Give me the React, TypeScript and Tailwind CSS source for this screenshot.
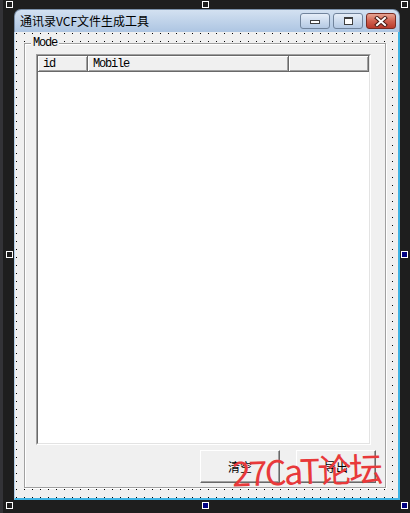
import React from "react";

const cjk = "font-['Noto_Sans_CJK_SC','Noto_Sans',sans-serif]";
const mono = "font-['Liberation_Mono',monospace]";

// designer selection handles around the form
const handles = [
  { x: 6, y: 1, on: false },
  { x: 202, y: 1, on: false },
  { x: 401, y: 1, on: false },
  { x: 6, y: 251, on: false },
  { x: 401, y: 251, on: true },
  { x: 6, y: 502, on: false },
  { x: 202, y: 502, on: true },
  { x: 401, y: 502, on: true },
];

const columns = [
  { label: "id", w: "w-[50px]" },
  { label: "Mobile", w: "w-[201px]" },
  { label: "", w: "flex-1" },
];

function CaptionButton({ kind }: { kind: "min" | "max" | "close" }) {
  if (kind === "close") {
    return (
      <div className="w-[30px] h-[16px] rounded-[3px] border border-[#7a2b22] bg-gradient-to-b from-[#e7a493] via-[#d0604f] to-[#b93a2c] flex items-center justify-center">
        <svg width="14" height="11" viewBox="0 0 14 11">
          <path d="M3 2 L11 9 M11 2 L3 9" stroke="#4a1a14" strokeWidth="4" strokeLinecap="square" />
          <path d="M3 2 L11 9 M11 2 L3 9" stroke="#fff" strokeWidth="2" strokeLinecap="square" />
        </svg>
      </div>
    );
  }
  return (
    <div className="w-[30px] h-[16px] rounded-[3px] border border-[#71849c] bg-gradient-to-b from-[#e6eef8] to-[#b4c9e3] flex justify-center">
      {kind === "min" ? (
        <div className="mt-[6px] w-[10px] h-[4px] bg-white border border-[#3f3f3f]" />
      ) : (
        <div className="mt-[3px] w-[9px] h-[8px] bg-white border border-[#3f3f3f] border-t-2" />
      )}
    </div>
  );
}

function FormButton({ label }: { label: string }) {
  return (
    <div
      className={`w-[80px] h-[33px] bg-[#f0f0f0] border border-t-white border-l-white border-r-[#696969] border-b-[#696969] shadow-[inset_-1px_-1px_0_#a0a0a0] flex items-center justify-center text-[12px] text-black ${cjk}`}
    >
      {label}
    </div>
  );
}

export default function App() {
  return (
    <div className="relative w-[410px] h-[513px] bg-[#1e1e1e] flex overflow-hidden">
      <div className="w-[3px] h-full bg-[#333337]" />

      <div className="ml-[11px] mt-[9px] w-[386px] flex flex-col">
        {/* title bar */}
        <div className="h-[23px] rounded-t-[7px] border-t border-x border-[#7a90aa] bg-gradient-to-b from-[#d3e1f1] to-[#adc5e2] flex pl-[5px] pr-[3px]">
          <span className={`self-center text-[12px] text-black ${cjk}`}>通讯录VCF文件生成工具</span>
          <div className="ml-auto mt-[3px] flex gap-[3px] h-[16px]">
            <CaptionButton kind="min" />
            <CaptionButton kind="max" />
            <CaptionButton kind="close" />
          </div>
        </div>

        {/* client area with designer grid */}
        <div className="h-[468px] border-l border-l-[#b3cfe9] border-r-2 border-b-2 border-r-[#3fb3e3] border-b-[#3fb3e3] bg-[#f0f0f0] bg-[linear-gradient(transparent_1px,#f0f0f0_1px),linear-gradient(to_right,#000_1px,#f0f0f0_1px)] bg-[length:8px_8px] bg-[position:1px_1px]">
          <fieldset className="ml-[9px] mt-[5px] w-[362px] border border-[#a0a0a0] shadow-[inset_1px_1px_0_#fff,1px_1px_0_#fff] bg-[#f0f0f0]">
            <legend className={`ml-[6px] px-[2px] bg-[#f0f0f0] text-[12px] leading-[12px] tracking-[-1.2px] text-black ${mono}`}>
              Mode
            </legend>
            <div className="pl-[11px] pr-[9px] pt-[5px] pb-[4px] flex flex-col gap-[5px]">
              {/* list view */}
              <div className="w-[335px] h-[391px] border border-t-[#a0a0a0] border-l-[#a0a0a0] border-r-white border-b-white flex">
                <div className="flex-1 border border-t-[#696969] border-l-[#696969] border-r-[#e3e3e3] border-b-[#e3e3e3] bg-white flex flex-col">
                  <div className="h-[16px] flex">
                    {columns.map((c, i) => (
                      <div
                        key={i}
                        className={`${c.w} h-full bg-[#f0f0f0] border-r border-b border-[#696969] shadow-[inset_1px_1px_0_#fff,inset_-1px_-1px_0_#a0a0a0] pl-[5px] flex items-center text-[12px] tracking-[-1.2px] text-black ${mono}`}
                      >
                        {c.label}
                      </div>
                    ))}
                  </div>
                </div>
              </div>
              <div className="flex justify-end gap-[16px]">
                <FormButton label="清空" />
                <FormButton label="导出" />
              </div>
            </div>
          </fieldset>
        </div>
      </div>

      {handles.map((h, i) => (
        <div
          key={i}
          className={`absolute w-[7px] h-[7px] border border-white ${h.on ? "bg-[#000080]" : "bg-[#1e1e1e]"}`}
          style={{ left: h.x, top: h.y }}
        />
      ))}

      {/* watermark */}
      <div className={`absolute left-[232px] top-[448px] text-[34px] leading-[44px] tracking-[-2.5px] text-[#e8393a] -rotate-2 ${cjk}`}>
        27CaT论坛
      </div>
    </div>
  );
}
